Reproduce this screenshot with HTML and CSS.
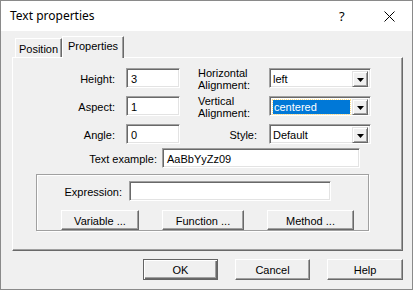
FILE: index.html
```html
<!DOCTYPE html>
<html>
<head>
<meta charset="utf-8">
<link rel="stylesheet" href="styles.css">
</head>
<body>
<div class="window">
  <div class="titlebar">
    <span class="title">Text properties</span>
    <span class="help-q">?</span>
    <span class="close">
      <svg width="11" height="11" viewBox="0 0 11 11"><path d="M0.5 0.5 L10.5 10.5 M10.5 0.5 L0.5 10.5" stroke="#000" stroke-width="1" fill="none"/></svg>
    </span>
  </div>
  <div class="client">
    <div class="tabs">
      <div class="tab">Position</div>
      <div class="tab active">Properties</div>
    </div>
    <div class="panel">
      <div class="form">
        <label class="lbl">Height:</label>
        <div class="edit small">3</div>
        <label class="lbl2">Horizontal<br>Alignment:</label>
        <div class="combo"><span class="combo-text">left</span><span class="drop"><svg width="7" height="4" viewBox="0 0 7 4"><path d="M0 0H7L3.5 4Z" fill="#000"/></svg></span></div>

        <label class="lbl">Aspect:</label>
        <div class="edit small">1</div>
        <label class="lbl2">Vertical<br>Alignment:</label>
        <div class="combo"><span class="combo-text"><span class="selected">centered</span></span><span class="drop"><svg width="7" height="4" viewBox="0 0 7 4"><path d="M0 0H7L3.5 4Z" fill="#000"/></svg></span></div>

        <label class="lbl">Angle:</label>
        <div class="edit small">0</div>
        <label class="lbl2 right">Style:</label>
        <div class="combo"><span class="combo-text">Default</span><span class="drop"><svg width="7" height="4" viewBox="0 0 7 4"><path d="M0 0H7L3.5 4Z" fill="#000"/></svg></span></div>
      </div>
      <div class="example-row">
        <label class="ex-lbl">Text example:</label>
        <div class="edit example">AaBbYyZz09</div>
      </div>
      <div class="group">
        <div class="expr-row">
          <label class="expr-lbl">Expression:</label>
          <div class="edit expr"></div>
        </div>
        <div class="group-buttons">
          <div class="btn w-var">Variable ...</div>
          <div class="btn w-fun">Function ...</div>
          <div class="btn w-met">Method ...</div>
        </div>
      </div>
    </div>
    <div class="footer">
      <div class="btn dlg default">OK</div>
      <div class="btn dlg">Cancel</div>
      <div class="btn dlg help">Help</div>
    </div>
  </div>
</div>
</body>
</html>
```

FILE: styles.css
```css
* { box-sizing: border-box; }
html, body { margin: 0; padding: 0; }
body {
  width: 413px;
  height: 290px;
  overflow: hidden;
  background: #f0f0f0;
  font-family: "Liberation Sans", Arial, sans-serif;
  font-size: 11px;
  color: #000;
}
.window {
  width: 413px;
  height: 290px;
  border: 1px solid #8a8a8a;
  background: #f0f0f0;
}
.titlebar {
  height: 30px;
  background: #fff;
  display: flex;
  align-items: center;
  position: relative;
}
.title {
  font-family: "Noto Sans", "Open Sans", sans-serif;
  font-size: 12px;
  margin-left: 9px;
  flex: 1;
  margin-top: -1px;
}
.help-q {
  font-family: "Noto Sans", sans-serif;
  font-size: 13px;
  width: 8px;
  margin-right: 37px;
  margin-top: -1px;
}
.close {
  width: 11px;
  height: 11px;
  margin-right: 17px;
  display: flex;
}
.client {
  height: 257px;
}
.tabs {
  margin-top: 5px;
  margin-left: 11px;
  height: 21px;
  display: flex;
  align-items: flex-end;
}
.tab {
  height: 19px;
  width: 47px;
  margin-left: 3px;
  border-top: 1px solid #fff;
  border-left: 1px solid #fff;
  border-right: 1px solid #696969;
  box-shadow: inset -1px 0 #a0a0a0;
  display: flex;
  align-items: center;
  justify-content: center;
  padding-top: 1px;
  background: #f0f0f0;
}
.tab.active {
  width: 62px;
  height: 22px;
  margin-left: 0;
  margin-bottom: -1px;
  position: relative;
  z-index: 1;
  padding-top: 0;
  padding-bottom: 4px;
}
.panel {
  margin-left: 11px;
  width: 391px;
  height: 194px;
  border-top: 1px solid #fff;
  border-left: 1px solid #fff;
  border-right: 1px solid #696969;
  border-bottom: 1px solid #696969;
  box-shadow: inset -1px -1px #a0a0a0;
  padding-top: 10px;
}
.form {
  display: grid;
  grid-template-columns: 113px 72px 71px 102px;
  grid-auto-rows: 20px;
  row-gap: 8px;
  align-items: center;
}
.lbl {
  text-align: right;
  padding-right: 11px;
  padding-top: 2px;
}
.lbl2 {
  line-height: 12px;
  padding-top: 1px;
}
.lbl2.right {
  text-align: right;
  padding-right: 12px;
  padding-top: 2px;
}
.edit {
  height: 20px;
  background: #fff;
  border: 1px solid;
  border-color: #a0a0a0 #fff #fff #a0a0a0;
  box-shadow: inset 1px 1px #696969, inset -1px -1px #e3e3e3;
  padding: 3px 0 0 4px;
  line-height: 14px;
  white-space: nowrap;
  overflow: hidden;
}
.edit.small { width: 54px; }
.combo {
  width: 102px;
  height: 20px;
  background: #fff;
  border: 1px solid;
  border-color: #a0a0a0 #fff #fff #a0a0a0;
  box-shadow: inset 1px 1px #696969, inset -1px -1px #e3e3e3;
  padding: 2px;
  display: flex;
}
.combo-text {
  flex: 1;
  padding: 1px 1px 0 1px;
  line-height: 14px;
}
.selected {
  display: block;
  background: #0078d7;
  color: #fff;
  height: 14px;
  line-height: 14px;
  padding-left: 1px;
  outline: 1px dotted #ffe08a;
  outline-offset: 0;
  margin-right: 1px;
}
.drop {
  width: 16px;
  height: 16px;
  background: #f0f0f0;
  border: 1px solid;
  border-color: #e3e3e3 #696969 #696969 #e3e3e3;
  box-shadow: inset 1px 1px #fff, inset -1px -1px #a0a0a0;
  display: flex;
  align-items: center;
  justify-content: center;
  padding-top: 1px;
}
.example-row {
  display: flex;
  margin-top: 4px;
  align-items: center;
}
.ex-lbl {
  width: 149px;
  text-align: right;
  padding-right: 5px;
  padding-top: 2px;
}
.edit.example { width: 198px; }
.group {
  margin-top: 6px;
  margin-left: 23px;
  width: 333px;
  height: 57px;
  border: 1px solid #a0a0a0;
  box-shadow: inset 1px 1px #fff, 1px 1px #fff;
  padding-top: 6px;
}
.expr-row {
  display: flex;
  align-items: center;
}
.expr-lbl {
  width: 92px;
  text-align: right;
  padding-right: 7px;
  padding-top: 2px;
}
.edit.expr { width: 202px; }
.group-buttons {
  margin-top: 9px;
  margin-left: 24px;
  display: flex;
  gap: 23px;
}
.btn {
  height: 20px;
  background: #f0f0f0;
  border: 1px solid;
  border-color: #fff #696969 #696969 #fff;
  box-shadow: inset -1px -1px #a0a0a0;
  display: flex;
  align-items: center;
  justify-content: center;
  padding-top: 1px;
}
.w-var { width: 78px; }
.w-fun { width: 82px; }
.w-met { width: 87px; }
.footer {
  margin-top: 8px;
  margin-left: 11px;
  width: 391px;
  display: flex;
  justify-content: flex-end;
  gap: 17px;
}
.btn.dlg {
  width: 75px;
  height: 21px;
}
.btn.help { width: 76px; }
.btn.default {
  border-color: #646464;
  box-shadow: inset 1px 1px #fff, inset -1px -1px #696969, inset -2px -2px #a0a0a0;
}
```
